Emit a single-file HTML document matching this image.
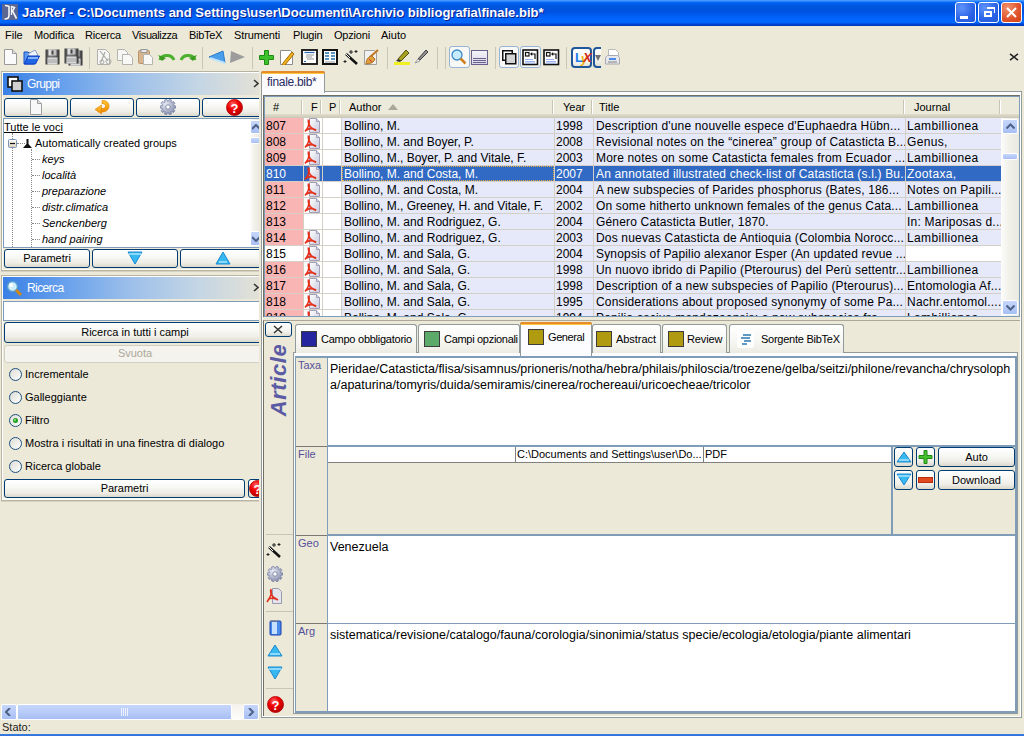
<!DOCTYPE html><html><head><meta charset="utf-8"><style>
*{margin:0;padding:0;box-sizing:border-box}
html,body{width:1024px;height:736px;overflow:hidden;background:#ECE9D8;font-family:"Liberation Sans",sans-serif;font-size:11px;color:#000}
.a{position:absolute}
.t{white-space:pre;line-height:12px;font-size:11px}
.c{white-space:pre;line-height:16px;font-size:12px}
.btn{border:1px solid #003C74;border-radius:3px;background:linear-gradient(#FFFFFF 0%,#F8F8F5 40%,#EEEDE6 75%,#DCD8CC 100%);}
.hdr{background:linear-gradient(90deg,#3A80E6 0%,#6AA2EC 25%,#9DC0EA 50%,#C3D5E5 75%,#E3E1D6 100%)}
.sb{background:linear-gradient(90deg,#FCFCFA,#F0EFE8 50%,#E9E8E1)}
.sbb{border:1px solid #fff;border-radius:2px;background:linear-gradient(#C6D6FB,#B8CCF8 50%,#A6BEF3)}
.tb{white-space:pre;overflow:hidden;text-overflow:clip}
</style></head><body>
<svg width="0" height="0" style="position:absolute"><defs><radialGradient id="hg" cx="0.4" cy="0.3" r="0.75"><stop offset="0" stop-color="#FF6A6A"/><stop offset="0.45" stop-color="#F00000"/><stop offset="1" stop-color="#B00000"/></radialGradient><linearGradient id="rg" x1="0" y1="0" x2="1" y2="1"><stop offset="0" stop-color="#DCDBD3"/><stop offset="1" stop-color="#FFFFFF"/></linearGradient></defs></svg>
<svg width="0" height="0" style="position:absolute"><defs><linearGradient id="dk" x1="0" y1="0" x2="1" y2="0"><stop offset="0" stop-color="#3A3A3A"/><stop offset="0.3" stop-color="#7A7A7A"/><stop offset="0.7" stop-color="#6A6A6A"/><stop offset="1" stop-color="#353535"/></linearGradient><linearGradient id="sh" x1="0" y1="0" x2="1" y2="0"><stop offset="0" stop-color="#E8E8E8"/><stop offset="1" stop-color="#B8B8B8"/></linearGradient></defs></svg>
<div class="a " style="left:0px;top:0px;width:1024px;height:26px;background:linear-gradient(#4A9CFF 0px,#3D93FF 1px,#0A6CFF 2px,#0062F0 3px,#0058E2 5px,#0054DC 8px,#0052E2 12px,#005CF2 15px,#0066FE 19px,#0066FC 22.5px,#0052E2 23.5px,#003CC4 25px,#0034B0 26px)"></div>
<svg class="a" style="left:2px;top:4px;" width="16" height="16" viewBox="0 0 16 16"><rect width="16" height="16" fill="#5B6792"/><path d="M3 1.5c1.5 0 3 0.5 4 1v9c0 2-1.5 3.5-4.5 3.5" fill="none" stroke="#F4F4F4" stroke-width="1.6"/><path d="M9.5 2v9" stroke="#F4F4F4" stroke-width="1.3"/><path d="M9 2.5l3.5 1-2 3.5 4 7.5" fill="none" stroke="#F4F4F4" stroke-width="1.6"/></svg>
<div class="a t" style="left:22px;top:5px;color:#fff;font-weight:bold;font-size:13px;line-height:16px;text-shadow:1px 1px 0 #0A1E8C">JabRef - C:\Documents and Settings\user\Documenti\Archivio bibliografia\finale.bib*</div>
<div class="a " style="left:955px;top:2px;width:21px;height:21px;border:1px solid #fff;border-radius:3px;background:radial-gradient(circle at 30% 25%,#5E93FA,#2B63E6 60%,#2059DA)"></div>
<div class="a " style="left:978px;top:2px;width:21px;height:21px;border:1px solid #fff;border-radius:3px;background:radial-gradient(circle at 30% 25%,#5E93FA,#2B63E6 60%,#2059DA)"></div>
<div class="a " style="left:1001px;top:2px;width:21px;height:21px;border:1px solid #fff;border-radius:3px;background:radial-gradient(circle at 30% 25%,#F0926E,#E0522A 60%,#D04416)"></div>
<div class="a " style="left:960px;top:16px;width:8px;height:3px;background:#fff"></div>
<div class="a " style="left:984px;top:11px;width:8px;height:6px;border:2px solid #fff;border-top-width:2px"></div>
<div class="a " style="left:987px;top:7px;width:8px;height:6px;border:1px solid #fff;border-top-width:2px;border-left:none;border-bottom:none"></div>
<svg class="a" style="left:1006px;top:7px;" width="11" height="11" viewBox="0 0 11 11"><path d="M1 1L10 10M10 1L1 10" stroke="#fff" stroke-width="2"/></svg>
<div class="a t" style="left:5px;top:29px;letter-spacing:0px">File</div>
<div class="a t" style="left:34px;top:29px;letter-spacing:-0.1px">Modifica</div>
<div class="a t" style="left:85px;top:29px;letter-spacing:-0.2px">Ricerca</div>
<div class="a t" style="left:132px;top:29px;letter-spacing:-0.4px">Visualizza</div>
<div class="a t" style="left:189px;top:29px;letter-spacing:-0.3px">BibTeX</div>
<div class="a t" style="left:234px;top:29px;letter-spacing:-0.1px">Strumenti</div>
<div class="a t" style="left:293px;top:29px;letter-spacing:-0.2px">Plugin</div>
<div class="a t" style="left:334px;top:29px;letter-spacing:-0.2px">Opzioni</div>
<div class="a t" style="left:381px;top:29px;letter-spacing:0px">Aiuto</div>
<svg class="a" style="left:2px;top:49px;" width="16" height="16" viewBox="0 0 16 16"><path d="M2.5 0.5h8l4 4v11h-12z" fill="#FAFAFA" stroke="#9A9A9A"/><path d="M10.5 0.5v4h4" fill="#E0E0E0" stroke="#9A9A9A"/></svg>
<svg class="a" style="left:23px;top:49px;" width="17" height="16" viewBox="0 0 17 16"><path d="M1 3h4l1 1h5v11H1z" fill="#5A9AF0" stroke="#1A4AC0"/><path d="M5 5l7-4 3 5-7 4z" fill="#F0F4FA" stroke="#8AA0C0"/><path d="M1.5 15l3.5-8h11.5l-4 8z" fill="#2266E8" stroke="#0C3CC0"/><path d="M5 9h10" stroke="#A8CCFF" stroke-width="1.5"/></svg>
<svg class="a" style="left:45px;top:49px;" width="15" height="16" viewBox="0 0 15 16"><rect x="0.5" y="0.5" width="14" height="15" fill="url(#dk)"/><rect x="3.5" y="0.5" width="8" height="6" fill="url(#sh)"/><rect x="6.5" y="1.5" width="2" height="4" fill="#444"/><rect x="2.5" y="8.5" width="10" height="7" fill="#D8D8D8"/><path d="M2.5 11.0h10M2.5 13.0h10" stroke="#A0A0A0"/></svg>
<svg class="a" style="left:64px;top:48px;" width="20" height="18" viewBox="0 0 20 18"><rect x="4.5" y="2.5" width="14" height="15" fill="url(#dk)"/><rect x="7.5" y="2.5" width="8" height="6" fill="url(#sh)"/><rect x="10.5" y="3.5" width="2" height="4" fill="#444"/><rect x="6.5" y="10.5" width="10" height="7" fill="#D8D8D8"/><path d="M6.5 13.0h10M6.5 15.0h10" stroke="#A0A0A0"/><rect x="0.5" y="0.5" width="14" height="15" fill="url(#dk)"/><rect x="3.5" y="0.5" width="8" height="6" fill="url(#sh)"/><rect x="6.5" y="1.5" width="2" height="4" fill="#444"/><rect x="2.5" y="8.5" width="10" height="7" fill="#D8D8D8"/><path d="M2.5 11.0h10M2.5 13.0h10" stroke="#A0A0A0"/></svg>
<div class="a " style="left:89px;top:47px;width:1px;height:22px;background:#C9C6B6"></div>
<svg class="a" style="left:96px;top:49px;" width="17" height="16" viewBox="0 0 17 16"><path d="M1.5 0.5h8l4 4v11h-12z" fill="#F6F6F4" stroke="#B0B0AC"/><path d="M4 2l8 10M9 3l-4 10" stroke="#A8A8A4" stroke-width="1.2"/><circle cx="12.5" cy="12.5" r="2.5" fill="none" stroke="#A8A8A4"/><circle cx="6" cy="13" r="2" fill="none" stroke="#A8A8A4"/></svg>
<svg class="a" style="left:117px;top:49px;" width="17" height="16" viewBox="0 0 17 16"><path d="M0.5 0.5h7l3 3v8h-10z" fill="#F6F6F4" stroke="#B4B4B0"/><path d="M5.5 5.5h7l3 3v7h-10z" fill="#F8F8F6" stroke="#B4B4B0"/></svg>
<svg class="a" style="left:138px;top:49px;" width="15" height="16" viewBox="0 0 15 16"><rect x="0.5" y="1.5" width="11" height="13" rx="1" fill="#D9B58E" stroke="#B89470"/><rect x="3" y="0.5" width="6" height="3" fill="#E8E8E8" stroke="#999"/><path d="M5.5 5.5h6l3 3v7h-9z" fill="#F8F8F6" stroke="#B4B4B0"/></svg>
<svg class="a" style="left:158px;top:52px;" width="18" height="9" viewBox="0 0 18 9"><path d="M2 8C3 3 13 1 16 8" fill="none" stroke="#4BB02C" stroke-width="3"/><path d="M0 3l4 6 4-3z" fill="#3C9A20"/></svg>
<svg class="a" style="left:179px;top:52px;" width="18" height="9" viewBox="0 0 18 9"><path d="M16 8C15 3 5 1 2 8" fill="none" stroke="#4BB02C" stroke-width="3"/><path d="M18 3l-4 6-4-3z" fill="#3C9A20"/></svg>
<div class="a " style="left:202px;top:47px;width:1px;height:22px;background:#C9C6B6"></div>
<svg class="a" style="left:208px;top:50px;" width="18" height="14" viewBox="0 0 18 14"><path d="M1 7L15 1l2 12z" fill="#4A9FEA" stroke="#2A7AD0"/><path d="M2 8l15 5" stroke="#BFE3FF" stroke-width="2"/></svg>
<svg class="a" style="left:229px;top:50px;" width="17" height="14" viewBox="0 0 17 14"><path d="M16 7L2 1l-1 12z" fill="#9C9C9C"/></svg>
<div class="a " style="left:252px;top:47px;width:1px;height:22px;background:#C9C6B6"></div>
<svg class="a" style="left:259px;top:50px;" width="15" height="15" viewBox="0 0 15 15"><path d="M5.5 0.5h4v5h5v4h-5v5h-4v-5h-5v-4h5z" fill="#3DC22C" stroke="#1E8A14"/></svg>
<svg class="a" style="left:279px;top:49px;" width="16" height="16" viewBox="0 0 16 16"><path d="M1.5 1.5h10l2 2v12h-12z" fill="#fff" stroke="#8C8C8C"/><path d="M4 14l9-11 2 2-9 11-3 1z" fill="#F0B020" stroke="#A86E00"/></svg>
<svg class="a" style="left:301px;top:49px;" width="17" height="16" viewBox="0 0 17 16"><rect x="1" y="1" width="15" height="14" fill="#fff" stroke="#111" stroke-width="1.8"/><path d="M3.5 3.5h10" stroke="#2A68B8" stroke-width="1.2"/><path d="M5 6h8M5 8h6M6 10h7" stroke="#8A8A8A" stroke-width="0.9"/><path d="M3 12.5h2" stroke="#2A68B8" stroke-width="1"/></svg>
<svg class="a" style="left:322px;top:49px;" width="16" height="16" viewBox="0 0 16 16"><rect x="1" y="1" width="14" height="14" fill="#fff" stroke="#111" stroke-width="2"/><path d="M3 4h4M9 4h4M3 7h4M9 7h4M3 10h4M9 10h4" stroke="#2070B0" stroke-width="1.3"/><path d="M3 13h10" stroke="#909090"/></svg>
<svg class="a" style="left:343px;top:49px;" width="16" height="16" viewBox="0 0 16 16"><path d="M3 5l11 10" stroke="#111" stroke-width="2.5"/><path d="M3 5l4 4" stroke="#fff" stroke-width="1"/><path d="M8 1v4M6 3h4M13 1v3M11.5 2.5h3M2 11v3M0.5 12.5h3" stroke="#222" stroke-width="1"/></svg>
<svg class="a" style="left:363px;top:49px;" width="17" height="16" viewBox="0 0 17 16"><path d="M1.5 1.5h10l2 2v12h-12z" fill="#F0F0F0" stroke="#A0A0A0"/><path d="M7 8l8-7" stroke="#C07820" stroke-width="2"/><path d="M3 15c0-5 3-8 6-8l3 3c-1 3-4 5-9 5z" fill="#E0A040" stroke="#B07020"/><path d="M6 10l3 3" stroke="#D03030"/></svg>
<div class="a " style="left:387px;top:47px;width:1px;height:22px;background:#C9C6B6"></div>
<svg class="a" style="left:393px;top:49px;" width="17" height="16" viewBox="0 0 17 16"><path d="M5 10l8-9 3 3-8 8z" fill="#A8A020" stroke="#55500A"/><path d="M3 12l2-2 3 2-1 1z" fill="#333"/><rect x="1" y="13" width="16" height="3" fill="#F0F020"/></svg>
<svg class="a" style="left:414px;top:49px;" width="14" height="16" viewBox="0 0 14 16"><path d="M4 10l8-9 2 2-8 8z" fill="#909090" stroke="#404040"/><path d="M1 14l3-4 2 2z" fill="#fff" stroke="#999"/></svg>
<div class="a " style="left:437px;top:47px;width:1px;height:22px;background:#C9C6B6"></div>
<div class="a " style="left:445px;top:47px;width:1px;height:22px;background:#C9C6B6"></div>
<div class="a " style="left:449px;top:46px;width:21px;height:22px;border:1px solid #97B4D5;border-radius:3px;background:#F8F8F6"></div>
<svg class="a" style="left:451px;top:49px;" width="16" height="16" viewBox="0 0 16 16"><circle cx="6" cy="6" r="5" fill="#C8ECFF" stroke="#3A8AC8" stroke-width="1.3"/><path d="M9.5 9.5l5 5" stroke="#D08020" stroke-width="2.5"/></svg>
<svg class="a" style="left:471px;top:50px;" width="17" height="15" viewBox="0 0 17 15"><defs><linearGradient id="pv" x1="0" y1="0" x2="0" y2="1"><stop offset="0" stop-color="#F4F4FA"/><stop offset="1" stop-color="#D8D6EA"/></linearGradient></defs><rect x="0.5" y="0.5" width="16" height="14" fill="url(#pv)" stroke="#6A608A"/><path d="M2 8.5h13M2 10.5h13M2 12.5h13" stroke="#6A608A"/></svg>
<div class="a " style="left:495px;top:47px;width:1px;height:22px;background:#C9C6B6"></div>
<div class="a " style="left:499px;top:46px;width:20px;height:22px;border:1px solid #97B4D5;border-radius:3px;background:#F8F8F6"></div>
<svg class="a" style="left:501px;top:49px;" width="16" height="16" viewBox="0 0 16 16"><rect x="1.75" y="1.75" width="9.5" height="9.5" fill="#fff" stroke="#111" stroke-width="1.5"/><rect x="4.75" y="4.75" width="10" height="10" fill="#D4D4D4" stroke="#111" stroke-width="1.5"/></svg>
<div class="a " style="left:520px;top:46px;width:21px;height:22px;border:1px solid #97B4D5;border-radius:3px;background:#F8F8F6"></div>
<svg class="a" style="left:522px;top:49px;" width="17" height="17" viewBox="0 0 17 17"><rect x="1" y="1" width="14.5" height="14.5" fill="#fff" stroke="#111" stroke-width="1.6"/><rect x="3.5" y="3.5" width="3.5" height="3.5" fill="none" stroke="#111" stroke-width="1.2"/><path d="M13 10V5H9" fill="none" stroke="#111" stroke-width="1.2"/><path d="M8 5l2.2-2v4z" fill="#111"/><path d="M3 10.5h8M3 12.5h10M3 14h10" stroke="#8FA8F0" stroke-width="0.9"/></svg>
<svg class="a" style="left:543px;top:49px;" width="17" height="17" viewBox="0 0 17 17"><rect x="1" y="1" width="14.5" height="14.5" fill="#fff" stroke="#111" stroke-width="1.6"/><rect x="3.5" y="3.5" width="3.5" height="3.5" fill="none" stroke="#111" stroke-width="1.2"/><path d="M13 10V5H9" fill="none" stroke="#111" stroke-width="1.2"/><path d="M8 5l2.2-2v4z" fill="#111"/><path d="M3 10.5h8M3 12.5h10M3 14h10" stroke="#8FA8F0" stroke-width="0.9"/></svg>
<div class="a " style="left:566px;top:47px;width:1px;height:22px;background:#C9C6B6"></div>
<div class="a " style="left:571px;top:47px;width:21px;height:21px;border:2px solid #20569A;border-radius:4px;background:linear-gradient(#FFFFFF,#F6F5F0 70%,#E8E6DC)"></div>
<div class="a t" style="left:575px;top:51px;color:#1E7CF0;font-size:13px;line-height:13px;font-weight:bold;letter-spacing:-1px">L</div>
<div class="a t" style="left:581px;top:53px;color:#F0B010;font-size:12px;line-height:12px;font-weight:bold;font-style:italic">y</div>
<div class="a t" style="left:583px;top:51px;color:#D02818;font-size:13px;line-height:13px;font-style:italic;font-weight:bold">X</div>
<div class="a" style="left:593px;top:47px;width:8px;height:21px;overflow:hidden"><div class="a" style="left:0;top:0;width:12px;height:21px;border:2px solid #20569A;border-radius:4px;background:linear-gradient(#FFFFFF,#F0EFE8 70%,#E0DED4)"></div></div>
<svg class="a" style="left:595px;top:55px;" width="6" height="6" viewBox="0 0 6 6"><path d="M0 0h6l-3 6z" fill="#707070"/></svg>
<svg class="a" style="left:605px;top:49px;" width="15" height="16" viewBox="0 0 15 16"><path d="M3.5 0.5h7l3 3v5h-10z" fill="#fff" stroke="#B8B8B8"/><path d="M0.5 8.5l2-2h10l2 2v6.5h-14z" fill="#E8E8EC" stroke="#A8A8B0"/><rect x="4" y="9" width="7" height="2" fill="#4A8AE8"/><path d="M3 13h9" stroke="#808080"/></svg>
<svg class="a" style="left:1009px;top:53px;" width="10" height="8" viewBox="0 0 10 8"><path d="M1 0.8l8 6.4M9 0.8l-8 6.4" stroke="#222" stroke-width="1.5"/></svg>
<div class="a" style="left:0;top:0;width:259px;height:736px;overflow:hidden">
<div class="a " style="left:1px;top:71px;width:259px;height:200px;border:1px solid #B8B4A4;border-right:none;background:#ECE9D8"></div>
<div class="a " style="left:2px;top:72px;width:258px;height:1px;background:#fff"></div>
<div class="a " style="left:2px;top:72px;width:1px;height:197px;background:#fff"></div>
<div class="a " style="left:2px;top:269px;width:258px;height:1px;background:#FCFBF5"></div>
<div class="a " style="left:1px;top:271px;width:259px;height:1px;background:#D6D2C2"></div>
<div class="a hdr" style="left:3px;top:73px;width:257px;height:22px;"></div>
<svg class="a" style="left:7px;top:76px;" width="16" height="16" viewBox="0 0 16 16"><rect x="1" y="1" width="10" height="10" fill="#fff" stroke="#111" stroke-width="1.6"/><rect x="5" y="5" width="10" height="10" fill="#D0D0D0" stroke="#111" stroke-width="1.6"/></svg>
<div class="a t" style="left:27px;top:77px;color:#fff;font-size:12px;line-height:14px;letter-spacing:-0.6px">Gruppi</div>
<svg class="a" style="left:253px;top:79px;" width="6" height="9" viewBox="0 0 6 9"><path d="M1 1l4 3.5L1 8" fill="none" stroke="#333" stroke-width="1.6"/></svg>
<div class="a btn" style="left:4px;top:98px;width:64px;height:19px;"></div>
<div class="a btn" style="left:70px;top:98px;width:64px;height:19px;"></div>
<div class="a btn" style="left:136px;top:98px;width:64px;height:19px;"></div>
<div class="a btn" style="left:202px;top:98px;width:78px;height:19px;"></div>
<svg class="a" style="left:30px;top:99px;" width="12" height="16" viewBox="0 0 12 16"><path d="M0.5 0.5h7l4 4v11h-11z" fill="#F8F8F8" stroke="#A0A0A0"/><path d="M7.5 0.5v4h4" fill="#ddd" stroke="#A0A0A0"/></svg>
<svg class="a" style="left:94px;top:99px;" width="17" height="16" viewBox="0 0 17 16"><defs><linearGradient id="rf" x1="0" y1="0" x2="0" y2="1"><stop offset="0" stop-color="#FFC830"/><stop offset="1" stop-color="#F08A00"/></linearGradient></defs><path d="M8 1.5c4 -0.5 7 2 7 5.5c0 4-3.5 6.5-8 6l0.5-3.5c2.5 0.3 4-1 4-2.5c0-1.8-1.5-2.5-3.5-2.3z" fill="url(#rf)" stroke="#E07800" stroke-width="0.6"/><path d="M1 10.5l6.5-4.5v9z" fill="url(#rf)" stroke="#E07800" stroke-width="0.6"/></svg>
<svg class="a" style="left:160px;top:99px;" width="16" height="16" viewBox="0 0 16 16"><defs><radialGradient id="gg" cx="0.35" cy="0.3" r="0.8"><stop offset="0" stop-color="#E8EAF4"/><stop offset="1" stop-color="#8088A8"/></radialGradient></defs><path d="M13.38 6.44L15.72 6.91L15.72 9.09L13.38 9.56L13.27 9.90L14.89 11.65L13.60 13.42L11.44 12.42L11.14 12.64L11.43 15.01L9.35 15.68L8.18 13.60L7.82 13.60L6.65 15.68L4.57 15.01L4.86 12.64L4.56 12.42L2.40 13.42L1.11 11.65L2.73 9.90L2.62 9.56L0.28 9.09L0.28 6.91L2.62 6.44L2.73 6.10L1.11 4.35L2.40 2.58L4.56 3.58L4.86 3.36L4.57 0.99L6.65 0.32L7.82 2.40L8.18 2.40L9.35 0.32L11.43 0.99L11.14 3.36L11.44 3.58L13.60 2.58L14.89 4.35L13.27 6.10z" fill="url(#gg)" stroke="#7078A0" stroke-width="0.7"/><circle cx="8" cy="8" r="2.2" fill="#fff" stroke="#70789A" stroke-width="0.8"/></svg>
<svg class="a" style="left:226px;top:99px;" width="17" height="17" viewBox="0 0 17 17"><circle cx="8.5" cy="8.5" r="8" fill="url(#hg)" stroke="#B00000" stroke-width="0.8"/><text x="8.5" y="13.5" text-anchor="middle" font-family="Liberation Sans" font-weight="bold" font-size="13" fill="#fff">?</text></svg>
<div class="a " style="left:3px;top:118px;width:257px;height:130px;background:#fff;border:1px solid #7F9DB9;border-right:none;overflow:hidden"></div>
<div class="a t" style="left:4px;top:120px;text-decoration:underline;line-height:14px">Tutte le voci</div>
<div class="a " style="left:12px;top:133px;width:1px;height:114px;border-left:1px dotted #888"></div>
<div class="a " style="left:31px;top:149px;width:1px;height:98px;border-left:1px dotted #888"></div>
<div class="a " style="left:17px;top:143px;width:8px;height:1px;border-top:1px dotted #888"></div>
<svg class="a" style="left:8px;top:139px;" width="9" height="9" viewBox="0 0 9 9"><defs><linearGradient id="mb" x1="0" y1="0" x2="0" y2="1"><stop offset="0" stop-color="#FFFFFF"/><stop offset="1" stop-color="#D8CDB8"/></linearGradient></defs><rect x="0.5" y="0.5" width="8" height="8" rx="1" fill="url(#mb)" stroke="#7A94B8"/><path d="M2 4.5h5" stroke="#111" stroke-width="1.2"/></svg>
<svg class="a" style="left:23px;top:139px;" width="9" height="9" viewBox="0 0 9 9"><path d="M3.5 0h2v5l3.5 4H0l3.5-4z" fill="#111"/></svg>
<div class="a t" style="left:35px;top:136px;line-height:14px">Automatically created groups</div>
<div class="a " style="left:32px;top:159px;width:8px;height:1px;border-top:1px dotted #888"></div>
<div class="a t" style="left:42px;top:152px;font-style:italic;line-height:14px">keys</div>
<div class="a " style="left:32px;top:175px;width:8px;height:1px;border-top:1px dotted #888"></div>
<div class="a t" style="left:42px;top:168px;font-style:italic;line-height:14px">località</div>
<div class="a " style="left:32px;top:191px;width:8px;height:1px;border-top:1px dotted #888"></div>
<div class="a t" style="left:42px;top:184px;font-style:italic;line-height:14px">preparazione</div>
<div class="a " style="left:32px;top:207px;width:8px;height:1px;border-top:1px dotted #888"></div>
<div class="a t" style="left:42px;top:200px;font-style:italic;line-height:14px">distr.climatica</div>
<div class="a " style="left:32px;top:223px;width:8px;height:1px;border-top:1px dotted #888"></div>
<div class="a t" style="left:42px;top:216px;font-style:italic;line-height:14px">Senckenberg</div>
<div class="a " style="left:32px;top:239px;width:8px;height:1px;border-top:1px dotted #888"></div>
<div class="a t" style="left:42px;top:232px;font-style:italic;line-height:14px">hand pairing</div>
<div class="a sb" style="left:250px;top:119px;width:10px;height:128px;"></div>
<div class="a sbb" style="left:250px;top:120px;width:16px;height:14px;"></div>
<svg class="a" style="left:252px;top:124px;" width="8" height="6" viewBox="0 0 8 6"><path d="M0 5l4-4 4 4" fill="none" stroke="#4D6185" stroke-width="2"/></svg>
<div class="a sbb" style="left:250px;top:137px;width:16px;height:7px;"></div>
<div class="a sbb" style="left:250px;top:231px;width:16px;height:15px;"></div>
<svg class="a" style="left:252px;top:236px;" width="8" height="6" viewBox="0 0 8 6"><path d="M0 1l4 4 4-4" fill="none" stroke="#4D6185" stroke-width="2"/></svg>
<div class="a btn" style="left:4px;top:249px;width:86px;height:19px;"></div>
<div class="a t" style="left:4px;top:252px;width:86px;text-align:center">Parametri</div>
<div class="a btn" style="left:92px;top:249px;width:86px;height:19px;"></div>
<svg class="a" style="left:127px;top:251px;" width="16" height="14" viewBox="0 0 16 14"><path d="M1 1h14L8 13z" fill="#38B8F0" stroke="#1A88D0"/><path d="M2 3h12" stroke="#A8E4FF" stroke-width="1.5"/></svg>
<div class="a btn" style="left:180px;top:249px;width:100px;height:19px;"></div>
<svg class="a" style="left:215px;top:251px;" width="16" height="14" viewBox="0 0 16 14"><path d="M1 13h14L8 1z" fill="#38B8F0" stroke="#1A88D0"/><path d="M4 11h8" stroke="#A8E4FF" stroke-width="1.5"/></svg>
<div class="a " style="left:1px;top:275px;width:259px;height:226px;border:1px solid #B8B4A4;border-right:none"></div>
<div class="a " style="left:2px;top:276px;width:258px;height:1px;background:#fff"></div>
<div class="a " style="left:2px;top:276px;width:1px;height:223px;background:#fff"></div>
<div class="a " style="left:2px;top:498px;width:258px;height:2px;background:#FCFBF5"></div>
<div class="a " style="left:1px;top:501px;width:259px;height:1px;background:#D6D2C2"></div>
<div class="a hdr" style="left:3px;top:277px;width:257px;height:22px;"></div>
<svg class="a" style="left:6px;top:280px;" width="17" height="17" viewBox="0 0 17 17"><circle cx="6.5" cy="6.5" r="5" fill="#CFEFFF" stroke="#5A9ED0" stroke-width="1.5"/><circle cx="5" cy="5" r="2" fill="#fff"/><path d="M10 10l5 5" stroke="#D08818" stroke-width="3"/></svg>
<div class="a t" style="left:27px;top:281px;color:#fff;font-size:12px;line-height:14px;letter-spacing:-0.6px">Ricerca</div>
<svg class="a" style="left:253px;top:283px;" width="6" height="9" viewBox="0 0 6 9"><path d="M1 1l4 3.5L1 8" fill="none" stroke="#333" stroke-width="1.6"/></svg>
<div class="a " style="left:3px;top:301px;width:260px;height:20px;background:#fff;border:1px solid #7F9DB9"></div>
<div class="a btn" style="left:4px;top:322px;width:270px;height:21px;"></div>
<div class="a t" style="left:4px;top:326px;width:262px;text-align:center">Ricerca in tutti i campi</div>
<div class="a " style="left:4px;top:345px;width:270px;height:18px;border:1px solid #D0CFC4;border-radius:3px;background:#F4F3EE"></div>
<div class="a t" style="left:4px;top:347px;width:262px;text-align:center;color:#ACA899">Svuota</div>
<svg class="a" style="left:9px;top:368px;" width="13" height="13" viewBox="0 0 13 13"><circle cx="6.5" cy="6.5" r="6" fill="url(#rg)" stroke="#1C5180"/></svg>
<div class="a t" style="left:25px;top:367px;line-height:14px">Incrementale</div>
<svg class="a" style="left:9px;top:391px;" width="13" height="13" viewBox="0 0 13 13"><circle cx="6.5" cy="6.5" r="6" fill="url(#rg)" stroke="#1C5180"/></svg>
<div class="a t" style="left:25px;top:390px;line-height:14px">Galleggiante</div>
<svg class="a" style="left:9px;top:414px;" width="13" height="13" viewBox="0 0 13 13"><circle cx="6.5" cy="6.5" r="6" fill="url(#rg)" stroke="#1C5180"/><circle cx="6.5" cy="6.5" r="2.5" fill="#21A121"/><circle cx="6" cy="6" r="1" fill="#8EE08E"/></svg>
<div class="a t" style="left:25px;top:413px;line-height:14px">Filtro</div>
<svg class="a" style="left:9px;top:437px;" width="13" height="13" viewBox="0 0 13 13"><circle cx="6.5" cy="6.5" r="6" fill="url(#rg)" stroke="#1C5180"/></svg>
<div class="a t" style="left:25px;top:436px;line-height:14px">Mostra i risultati in una finestra di dialogo</div>
<svg class="a" style="left:9px;top:460px;" width="13" height="13" viewBox="0 0 13 13"><circle cx="6.5" cy="6.5" r="6" fill="url(#rg)" stroke="#1C5180"/></svg>
<div class="a t" style="left:25px;top:459px;line-height:14px">Ricerca globale</div>
<div class="a btn" style="left:4px;top:479px;width:241px;height:19px;"></div>
<div class="a t" style="left:4px;top:482px;width:241px;text-align:center">Parametri</div>
<div class="a btn" style="left:248px;top:479px;width:30px;height:19px;"></div>
<svg class="a" style="left:249px;top:480px;" width="17" height="17" viewBox="0 0 17 17"><circle cx="8.5" cy="8.5" r="8" fill="url(#hg)" stroke="#B00000" stroke-width="0.8"/><text x="8.5" y="13.5" text-anchor="middle" font-family="Liberation Sans" font-weight="bold" font-size="13" fill="#fff">?</text></svg>
<div class="a " style="left:1px;top:704px;width:258px;height:16px;background:linear-gradient(#F3F1EA,#FEFEFB)"></div>
<div class="a sbb" style="left:1px;top:704px;width:16px;height:16px;"></div>
<svg class="a" style="left:5px;top:708px;" width="7" height="8" viewBox="0 0 7 8"><path d="M5 0L1 4l4 4" fill="none" stroke="#4D6185" stroke-width="2"/></svg>
<div class="a sbb" style="left:17px;top:704px;width:215px;height:16px;"></div>
<svg class="a" style="left:121px;top:708px;" width="7" height="8" viewBox="0 0 7 8"><path d="M.5 0v8M2.5 0v8M4.5 0v8M6.5 0v8" stroke="#EEF3FF"/></svg>
<div class="a sbb" style="left:243px;top:704px;width:16px;height:16px;"></div>
<svg class="a" style="left:248px;top:708px;" width="7" height="8" viewBox="0 0 7 8"><path d="M1 0l4 4-4 4" fill="none" stroke="#4D6185" stroke-width="2"/></svg>
</div>
<div class="a " style="left:259px;top:70px;width:2px;height:651px;background:#ECE9D8"></div>
<div class="a t" style="left:2px;top:720px;line-height:14px;color:#222">Stato:</div>
<div class="a " style="left:0px;top:734px;width:1024px;height:2px;background:linear-gradient(#3C7FE2,#2F70D8)"></div>
<div class="a " style="left:261px;top:91px;width:761px;height:627px;border:1px solid #919B9C;background:#ECE9D8"></div>
<div class="a " style="left:262px;top:92px;width:759px;height:3px;background:#FCFCFE"></div>
<div class="a " style="left:262px;top:92px;width:1px;height:625px;background:#fff"></div>
<div class="a " style="left:1020px;top:92px;width:1px;height:625px;background:#fff"></div>
<div class="a " style="left:262px;top:716px;width:759px;height:1px;background:#fff"></div>
<div class="a " style="left:261px;top:71px;width:64px;height:22px;border:1px solid #919B9C;border-bottom:none;border-radius:3px 3px 0 0;background:#FCFCFE"></div>
<div class="a " style="left:261px;top:71px;width:64px;height:2px;background:#E68B2C;border-radius:3px 3px 0 0"></div>
<div class="a " style="left:262px;top:73px;width:62px;height:1px;background:#FFC73C"></div>
<div class="a t" style="left:267px;top:75px;color:#2A2A60;font-size:12px;line-height:14px;letter-spacing:-0.3px">finale.bib*</div>
<div class="a " style="left:263px;top:95px;width:757px;height:222px;border-top:1px solid #716F64;border-left:1px solid #716F64;background:#fff"></div>
<div class="a " style="left:264px;top:96px;width:756px;height:221px;border:1px solid #7F9DB9;border-right:1px solid #7F9DB9;background:#fff;overflow:hidden"></div>
<div class="a " style="left:265px;top:97px;width:736px;height:21px;background:linear-gradient(#EBEADB 0px,#EBEADB 17px,#E2DECD 17px,#D6D2C2 19px,#CBC7B8 21px)"></div>
<div class="a " style="left:1001px;top:97px;width:18px;height:21px;background:linear-gradient(#EBEADB 0px,#EBEADB 17px,#E2DECD 17px,#D6D2C2 19px,#CBC7B8 21px)"></div>
<div class="a " style="left:301px;top:100px;width:1px;height:14px;background:#C7C5B2"></div>
<div class="a " style="left:302px;top:100px;width:1px;height:14px;background:#FFFFFF"></div>
<div class="a " style="left:320px;top:100px;width:1px;height:14px;background:#C7C5B2"></div>
<div class="a " style="left:321px;top:100px;width:1px;height:14px;background:#FFFFFF"></div>
<div class="a " style="left:339px;top:100px;width:1px;height:14px;background:#C7C5B2"></div>
<div class="a " style="left:340px;top:100px;width:1px;height:14px;background:#FFFFFF"></div>
<div class="a " style="left:552px;top:100px;width:1px;height:14px;background:#C7C5B2"></div>
<div class="a " style="left:553px;top:100px;width:1px;height:14px;background:#FFFFFF"></div>
<div class="a " style="left:591px;top:100px;width:1px;height:14px;background:#C7C5B2"></div>
<div class="a " style="left:592px;top:100px;width:1px;height:14px;background:#FFFFFF"></div>
<div class="a " style="left:903px;top:100px;width:1px;height:14px;background:#C7C5B2"></div>
<div class="a " style="left:904px;top:100px;width:1px;height:14px;background:#FFFFFF"></div>
<div class="a " style="left:999px;top:100px;width:1px;height:14px;background:#C7C5B2"></div>
<div class="a " style="left:1000px;top:100px;width:1px;height:14px;background:#FFFFFF"></div>
<div class="a t" style="left:273px;top:101px;line-height:12px">#</div>
<div class="a t" style="left:311px;top:101px;line-height:12px">F</div>
<div class="a t" style="left:329px;top:101px;line-height:12px">P</div>
<div class="a t" style="left:349px;top:101px;line-height:12px">Author</div>
<div class="a t" style="left:563px;top:101px;line-height:12px">Year</div>
<div class="a t" style="left:599px;top:101px;line-height:12px">Title</div>
<div class="a t" style="left:914px;top:101px;line-height:12px">Journal</div>
<svg class="a" style="left:388px;top:104px;" width="10" height="6" viewBox="0 0 10 6"><path d="M0 6L5 0l5 6z" fill="#ACA899"/></svg>
<div class="a" style="left:265px;top:118px;width:736px;height:198px;overflow:hidden">
<div class="a " style="left:0px;top:0px;width:38px;height:15px;background:#F9B4B4"></div>
<div class="a " style="left:39px;top:0px;width:18px;height:15px;background:#FFFFFF"></div>
<div class="a " style="left:58px;top:0px;width:18px;height:15px;background:#FFFFFF"></div>
<div class="a " style="left:77px;top:0px;width:212px;height:15px;background:#E5E9FA"></div>
<div class="a " style="left:290px;top:0px;width:38px;height:15px;background:#E5E9FA"></div>
<div class="a " style="left:329px;top:0px;width:311px;height:15px;background:#E5E9FA"></div>
<div class="a " style="left:641px;top:0px;width:95px;height:15px;background:#E5E9FA"></div>
<div class="a " style="left:0px;top:15px;width:736px;height:1px;background:#D4D0C8"></div>
<svg class="a" style="left:39px;top:0px;" width="17" height="15" viewBox="0 0 17 15"><defs><linearGradient id="pg" x1="0" y1="0" x2="1" y2="1"><stop offset="0" stop-color="#FFFFFF"/><stop offset="1" stop-color="#C8C8DC"/></linearGradient></defs><path d="M5.5 0.5h7l3 3v11h-10z" fill="url(#pg)" stroke="#A0A0B8"/><path d="M12.5 0.5v3h3" fill="#D8D8E8" stroke="#A0A0B8"/><path d="M4.5 1.5c-0.5 3 0.5 6 3 8.5l4.5 2.5M4.8 2c0.8 4-1 8.5-3.8 11.5M1.5 12.5c3-2 7-2.5 10.5-0.5" fill="none" stroke="#E5301C" stroke-width="1.7"/></svg>
<div class="a c" style="left:1px;top:0px;color:#000;width:37px;overflow:hidden">807</div>
<div class="a c" style="left:79px;top:0px;color:#000;width:210px;overflow:hidden">Bollino, M.</div>
<div class="a c" style="left:291px;top:0px;color:#000">1998</div>
<div class="a c" style="left:331px;top:0px;color:#000;width:309px;overflow:hidden;letter-spacing:0.17px">Description d'une nouvelle espece d'Euphaedra Hübn...</div>
<div class="a c" style="left:642px;top:0px;color:#000;width:96px;overflow:hidden;letter-spacing:0.35px">Lambillionea</div>
<div class="a " style="left:0px;top:16px;width:38px;height:15px;background:#F9B4B4"></div>
<div class="a " style="left:39px;top:16px;width:18px;height:15px;background:#FFFFFF"></div>
<div class="a " style="left:58px;top:16px;width:18px;height:15px;background:#FFFFFF"></div>
<div class="a " style="left:77px;top:16px;width:212px;height:15px;background:#E5E9FA"></div>
<div class="a " style="left:290px;top:16px;width:38px;height:15px;background:#E5E9FA"></div>
<div class="a " style="left:329px;top:16px;width:311px;height:15px;background:#E5E9FA"></div>
<div class="a " style="left:641px;top:16px;width:95px;height:15px;background:#E5E9FA"></div>
<div class="a " style="left:0px;top:31px;width:736px;height:1px;background:#D4D0C8"></div>
<svg class="a" style="left:39px;top:16px;" width="17" height="15" viewBox="0 0 17 15"><defs><linearGradient id="pg" x1="0" y1="0" x2="1" y2="1"><stop offset="0" stop-color="#FFFFFF"/><stop offset="1" stop-color="#C8C8DC"/></linearGradient></defs><path d="M5.5 0.5h7l3 3v11h-10z" fill="url(#pg)" stroke="#A0A0B8"/><path d="M12.5 0.5v3h3" fill="#D8D8E8" stroke="#A0A0B8"/><path d="M4.5 1.5c-0.5 3 0.5 6 3 8.5l4.5 2.5M4.8 2c0.8 4-1 8.5-3.8 11.5M1.5 12.5c3-2 7-2.5 10.5-0.5" fill="none" stroke="#E5301C" stroke-width="1.7"/></svg>
<div class="a c" style="left:1px;top:16px;color:#000;width:37px;overflow:hidden">808</div>
<div class="a c" style="left:79px;top:16px;color:#000;width:210px;overflow:hidden">Bollino, M. and Boyer, P.</div>
<div class="a c" style="left:291px;top:16px;color:#000">2008</div>
<div class="a c" style="left:331px;top:16px;color:#000;width:309px;overflow:hidden;letter-spacing:0.17px">Revisional notes on the “cinerea” group of Catasticta B...</div>
<div class="a c" style="left:642px;top:16px;color:#000;width:96px;overflow:hidden;letter-spacing:0.35px">Genus,</div>
<div class="a " style="left:0px;top:32px;width:38px;height:15px;background:#F9B4B4"></div>
<div class="a " style="left:39px;top:32px;width:18px;height:15px;background:#FFFFFF"></div>
<div class="a " style="left:58px;top:32px;width:18px;height:15px;background:#FFFFFF"></div>
<div class="a " style="left:77px;top:32px;width:212px;height:15px;background:#E5E9FA"></div>
<div class="a " style="left:290px;top:32px;width:38px;height:15px;background:#E5E9FA"></div>
<div class="a " style="left:329px;top:32px;width:311px;height:15px;background:#E5E9FA"></div>
<div class="a " style="left:641px;top:32px;width:95px;height:15px;background:#E5E9FA"></div>
<div class="a " style="left:0px;top:47px;width:736px;height:1px;background:#D4D0C8"></div>
<svg class="a" style="left:39px;top:32px;" width="17" height="15" viewBox="0 0 17 15"><defs><linearGradient id="pg" x1="0" y1="0" x2="1" y2="1"><stop offset="0" stop-color="#FFFFFF"/><stop offset="1" stop-color="#C8C8DC"/></linearGradient></defs><path d="M5.5 0.5h7l3 3v11h-10z" fill="url(#pg)" stroke="#A0A0B8"/><path d="M12.5 0.5v3h3" fill="#D8D8E8" stroke="#A0A0B8"/><path d="M4.5 1.5c-0.5 3 0.5 6 3 8.5l4.5 2.5M4.8 2c0.8 4-1 8.5-3.8 11.5M1.5 12.5c3-2 7-2.5 10.5-0.5" fill="none" stroke="#E5301C" stroke-width="1.7"/></svg>
<div class="a c" style="left:1px;top:32px;color:#000;width:37px;overflow:hidden">809</div>
<div class="a c" style="left:79px;top:32px;color:#000;width:210px;overflow:hidden">Bollino, M., Boyer, P. and Vitale, F.</div>
<div class="a c" style="left:291px;top:32px;color:#000">2003</div>
<div class="a c" style="left:331px;top:32px;color:#000;width:309px;overflow:hidden;letter-spacing:0.17px">More notes on some Catasticta females from Ecuador ...</div>
<div class="a c" style="left:642px;top:32px;color:#000;width:96px;overflow:hidden;letter-spacing:0.35px">Lambillionea</div>
<div class="a " style="left:0px;top:48px;width:38px;height:15px;background:#316AC5"></div>
<div class="a " style="left:39px;top:48px;width:18px;height:15px;background:#316AC5"></div>
<div class="a " style="left:58px;top:48px;width:18px;height:15px;background:#316AC5"></div>
<div class="a " style="left:77px;top:48px;width:212px;height:15px;background:#316AC5"></div>
<div class="a " style="left:290px;top:48px;width:38px;height:15px;background:#316AC5"></div>
<div class="a " style="left:329px;top:48px;width:311px;height:15px;background:#316AC5"></div>
<div class="a " style="left:641px;top:48px;width:95px;height:15px;background:#316AC5"></div>
<div class="a " style="left:0px;top:63px;width:736px;height:1px;background:#D4D0C8"></div>
<svg class="a" style="left:39px;top:48px;" width="17" height="15" viewBox="0 0 17 15"><defs><linearGradient id="pg" x1="0" y1="0" x2="1" y2="1"><stop offset="0" stop-color="#FFFFFF"/><stop offset="1" stop-color="#C8C8DC"/></linearGradient></defs><path d="M5.5 0.5h7l3 3v11h-10z" fill="url(#pg)" stroke="#A0A0B8"/><path d="M12.5 0.5v3h3" fill="#D8D8E8" stroke="#A0A0B8"/><path d="M4.5 1.5c-0.5 3 0.5 6 3 8.5l4.5 2.5M4.8 2c0.8 4-1 8.5-3.8 11.5M1.5 12.5c3-2 7-2.5 10.5-0.5" fill="none" stroke="#E5301C" stroke-width="1.7"/></svg>
<div class="a c" style="left:1px;top:48px;color:#fff;width:37px;overflow:hidden">810</div>
<div class="a c" style="left:79px;top:48px;color:#fff;width:210px;overflow:hidden">Bollino, M. and Costa, M.</div>
<div class="a c" style="left:291px;top:48px;color:#fff">2007</div>
<div class="a c" style="left:331px;top:48px;color:#fff;width:309px;overflow:hidden;letter-spacing:0.17px">An annotated illustrated check-list of Catasticta (s.l.) Bu...</div>
<div class="a c" style="left:642px;top:48px;color:#fff;width:96px;overflow:hidden;letter-spacing:0.35px">Zootaxa,</div>
<div class="a " style="left:77px;top:48px;width:212px;height:15px;border:1px dotted #E8B040"></div>
<div class="a " style="left:0px;top:64px;width:38px;height:15px;background:#F9B4B4"></div>
<div class="a " style="left:39px;top:64px;width:18px;height:15px;background:#FFFFFF"></div>
<div class="a " style="left:58px;top:64px;width:18px;height:15px;background:#FFFFFF"></div>
<div class="a " style="left:77px;top:64px;width:212px;height:15px;background:#E5E9FA"></div>
<div class="a " style="left:290px;top:64px;width:38px;height:15px;background:#E5E9FA"></div>
<div class="a " style="left:329px;top:64px;width:311px;height:15px;background:#E5E9FA"></div>
<div class="a " style="left:641px;top:64px;width:95px;height:15px;background:#E5E9FA"></div>
<div class="a " style="left:0px;top:79px;width:736px;height:1px;background:#D4D0C8"></div>
<svg class="a" style="left:39px;top:64px;" width="17" height="15" viewBox="0 0 17 15"><defs><linearGradient id="pg" x1="0" y1="0" x2="1" y2="1"><stop offset="0" stop-color="#FFFFFF"/><stop offset="1" stop-color="#C8C8DC"/></linearGradient></defs><path d="M5.5 0.5h7l3 3v11h-10z" fill="url(#pg)" stroke="#A0A0B8"/><path d="M12.5 0.5v3h3" fill="#D8D8E8" stroke="#A0A0B8"/><path d="M4.5 1.5c-0.5 3 0.5 6 3 8.5l4.5 2.5M4.8 2c0.8 4-1 8.5-3.8 11.5M1.5 12.5c3-2 7-2.5 10.5-0.5" fill="none" stroke="#E5301C" stroke-width="1.7"/></svg>
<div class="a c" style="left:1px;top:64px;color:#000;width:37px;overflow:hidden">811</div>
<div class="a c" style="left:79px;top:64px;color:#000;width:210px;overflow:hidden">Bollino, M. and Costa, M.</div>
<div class="a c" style="left:291px;top:64px;color:#000">2004</div>
<div class="a c" style="left:331px;top:64px;color:#000;width:309px;overflow:hidden;letter-spacing:0.17px">A new subspecies of Parides phosphorus (Bates, 186...</div>
<div class="a c" style="left:642px;top:64px;color:#000;width:96px;overflow:hidden;letter-spacing:0.22px">Notes on Papili...</div>
<div class="a " style="left:0px;top:80px;width:38px;height:15px;background:#F9B4B4"></div>
<div class="a " style="left:39px;top:80px;width:18px;height:15px;background:#FFFFFF"></div>
<div class="a " style="left:58px;top:80px;width:18px;height:15px;background:#FFFFFF"></div>
<div class="a " style="left:77px;top:80px;width:212px;height:15px;background:#E5E9FA"></div>
<div class="a " style="left:290px;top:80px;width:38px;height:15px;background:#E5E9FA"></div>
<div class="a " style="left:329px;top:80px;width:311px;height:15px;background:#E5E9FA"></div>
<div class="a " style="left:641px;top:80px;width:95px;height:15px;background:#E5E9FA"></div>
<div class="a " style="left:0px;top:95px;width:736px;height:1px;background:#D4D0C8"></div>
<svg class="a" style="left:39px;top:80px;" width="17" height="15" viewBox="0 0 17 15"><defs><linearGradient id="pg" x1="0" y1="0" x2="1" y2="1"><stop offset="0" stop-color="#FFFFFF"/><stop offset="1" stop-color="#C8C8DC"/></linearGradient></defs><path d="M5.5 0.5h7l3 3v11h-10z" fill="url(#pg)" stroke="#A0A0B8"/><path d="M12.5 0.5v3h3" fill="#D8D8E8" stroke="#A0A0B8"/><path d="M4.5 1.5c-0.5 3 0.5 6 3 8.5l4.5 2.5M4.8 2c0.8 4-1 8.5-3.8 11.5M1.5 12.5c3-2 7-2.5 10.5-0.5" fill="none" stroke="#E5301C" stroke-width="1.7"/></svg>
<div class="a c" style="left:1px;top:80px;color:#000;width:37px;overflow:hidden">812</div>
<div class="a c" style="left:79px;top:80px;color:#000;width:210px;overflow:hidden">Bollino, M., Greeney, H. and Vitale, F.</div>
<div class="a c" style="left:291px;top:80px;color:#000">2002</div>
<div class="a c" style="left:331px;top:80px;color:#000;width:309px;overflow:hidden;letter-spacing:0.17px">On some hitherto unknown females of the genus Cata...</div>
<div class="a c" style="left:642px;top:80px;color:#000;width:96px;overflow:hidden;letter-spacing:0.35px">Lambillionea</div>
<div class="a " style="left:0px;top:96px;width:38px;height:15px;background:#F9B4B4"></div>
<div class="a " style="left:39px;top:96px;width:18px;height:15px;background:#FFFFFF"></div>
<div class="a " style="left:58px;top:96px;width:18px;height:15px;background:#FFFFFF"></div>
<div class="a " style="left:77px;top:96px;width:212px;height:15px;background:#E5E9FA"></div>
<div class="a " style="left:290px;top:96px;width:38px;height:15px;background:#E5E9FA"></div>
<div class="a " style="left:329px;top:96px;width:311px;height:15px;background:#E5E9FA"></div>
<div class="a " style="left:641px;top:96px;width:95px;height:15px;background:#E5E9FA"></div>
<div class="a " style="left:0px;top:111px;width:736px;height:1px;background:#D4D0C8"></div>
<div class="a c" style="left:1px;top:96px;color:#000;width:37px;overflow:hidden">813</div>
<div class="a c" style="left:79px;top:96px;color:#000;width:210px;overflow:hidden">Bollino, M. and Rodriguez, G.</div>
<div class="a c" style="left:291px;top:96px;color:#000">2004</div>
<div class="a c" style="left:331px;top:96px;color:#000;width:309px;overflow:hidden;letter-spacing:0.17px">Género Catasticta Butler, 1870.</div>
<div class="a c" style="left:642px;top:96px;color:#000;width:96px;overflow:hidden;letter-spacing:0.22px">In: Mariposas d...</div>
<div class="a " style="left:0px;top:112px;width:38px;height:15px;background:#F9B4B4"></div>
<div class="a " style="left:39px;top:112px;width:18px;height:15px;background:#FFFFFF"></div>
<div class="a " style="left:58px;top:112px;width:18px;height:15px;background:#FFFFFF"></div>
<div class="a " style="left:77px;top:112px;width:212px;height:15px;background:#E5E9FA"></div>
<div class="a " style="left:290px;top:112px;width:38px;height:15px;background:#E5E9FA"></div>
<div class="a " style="left:329px;top:112px;width:311px;height:15px;background:#E5E9FA"></div>
<div class="a " style="left:641px;top:112px;width:95px;height:15px;background:#E5E9FA"></div>
<div class="a " style="left:0px;top:127px;width:736px;height:1px;background:#D4D0C8"></div>
<svg class="a" style="left:39px;top:112px;" width="17" height="15" viewBox="0 0 17 15"><defs><linearGradient id="pg" x1="0" y1="0" x2="1" y2="1"><stop offset="0" stop-color="#FFFFFF"/><stop offset="1" stop-color="#C8C8DC"/></linearGradient></defs><path d="M5.5 0.5h7l3 3v11h-10z" fill="url(#pg)" stroke="#A0A0B8"/><path d="M12.5 0.5v3h3" fill="#D8D8E8" stroke="#A0A0B8"/><path d="M4.5 1.5c-0.5 3 0.5 6 3 8.5l4.5 2.5M4.8 2c0.8 4-1 8.5-3.8 11.5M1.5 12.5c3-2 7-2.5 10.5-0.5" fill="none" stroke="#E5301C" stroke-width="1.7"/></svg>
<div class="a c" style="left:1px;top:112px;color:#000;width:37px;overflow:hidden">814</div>
<div class="a c" style="left:79px;top:112px;color:#000;width:210px;overflow:hidden">Bollino, M. and Rodriguez, G.</div>
<div class="a c" style="left:291px;top:112px;color:#000">2003</div>
<div class="a c" style="left:331px;top:112px;color:#000;width:309px;overflow:hidden;letter-spacing:0.17px">Dos nuevas Catasticta de Antioquia (Colombia Norocc...</div>
<div class="a c" style="left:642px;top:112px;color:#000;width:96px;overflow:hidden;letter-spacing:0.35px">Lambillionea</div>
<div class="a " style="left:0px;top:128px;width:38px;height:15px;background:#FFFFFF"></div>
<div class="a " style="left:39px;top:128px;width:18px;height:15px;background:#FFFFFF"></div>
<div class="a " style="left:58px;top:128px;width:18px;height:15px;background:#FFFFFF"></div>
<div class="a " style="left:77px;top:128px;width:212px;height:15px;background:#E5E9FA"></div>
<div class="a " style="left:290px;top:128px;width:38px;height:15px;background:#E5E9FA"></div>
<div class="a " style="left:329px;top:128px;width:311px;height:15px;background:#E5E9FA"></div>
<div class="a " style="left:641px;top:128px;width:95px;height:15px;background:#FFFFFF"></div>
<div class="a " style="left:0px;top:143px;width:736px;height:1px;background:#D4D0C8"></div>
<svg class="a" style="left:39px;top:128px;" width="17" height="15" viewBox="0 0 17 15"><defs><linearGradient id="pg" x1="0" y1="0" x2="1" y2="1"><stop offset="0" stop-color="#FFFFFF"/><stop offset="1" stop-color="#C8C8DC"/></linearGradient></defs><path d="M5.5 0.5h7l3 3v11h-10z" fill="url(#pg)" stroke="#A0A0B8"/><path d="M12.5 0.5v3h3" fill="#D8D8E8" stroke="#A0A0B8"/><path d="M4.5 1.5c-0.5 3 0.5 6 3 8.5l4.5 2.5M4.8 2c0.8 4-1 8.5-3.8 11.5M1.5 12.5c3-2 7-2.5 10.5-0.5" fill="none" stroke="#E5301C" stroke-width="1.7"/></svg>
<div class="a c" style="left:1px;top:128px;color:#000;width:37px;overflow:hidden">815</div>
<div class="a c" style="left:79px;top:128px;color:#000;width:210px;overflow:hidden">Bollino, M. and Sala, G.</div>
<div class="a c" style="left:291px;top:128px;color:#000">2004</div>
<div class="a c" style="left:331px;top:128px;color:#000;width:309px;overflow:hidden;letter-spacing:0.17px">Synopsis of Papilio alexanor Esper (An updated revue ...</div>
<div class="a c" style="left:642px;top:128px;color:#000;width:96px;overflow:hidden;letter-spacing:0.35px"></div>
<div class="a " style="left:0px;top:144px;width:38px;height:15px;background:#F9B4B4"></div>
<div class="a " style="left:39px;top:144px;width:18px;height:15px;background:#FFFFFF"></div>
<div class="a " style="left:58px;top:144px;width:18px;height:15px;background:#FFFFFF"></div>
<div class="a " style="left:77px;top:144px;width:212px;height:15px;background:#E5E9FA"></div>
<div class="a " style="left:290px;top:144px;width:38px;height:15px;background:#E5E9FA"></div>
<div class="a " style="left:329px;top:144px;width:311px;height:15px;background:#E5E9FA"></div>
<div class="a " style="left:641px;top:144px;width:95px;height:15px;background:#E5E9FA"></div>
<div class="a " style="left:0px;top:159px;width:736px;height:1px;background:#D4D0C8"></div>
<svg class="a" style="left:39px;top:144px;" width="17" height="15" viewBox="0 0 17 15"><defs><linearGradient id="pg" x1="0" y1="0" x2="1" y2="1"><stop offset="0" stop-color="#FFFFFF"/><stop offset="1" stop-color="#C8C8DC"/></linearGradient></defs><path d="M5.5 0.5h7l3 3v11h-10z" fill="url(#pg)" stroke="#A0A0B8"/><path d="M12.5 0.5v3h3" fill="#D8D8E8" stroke="#A0A0B8"/><path d="M4.5 1.5c-0.5 3 0.5 6 3 8.5l4.5 2.5M4.8 2c0.8 4-1 8.5-3.8 11.5M1.5 12.5c3-2 7-2.5 10.5-0.5" fill="none" stroke="#E5301C" stroke-width="1.7"/></svg>
<div class="a c" style="left:1px;top:144px;color:#000;width:37px;overflow:hidden">816</div>
<div class="a c" style="left:79px;top:144px;color:#000;width:210px;overflow:hidden">Bollino, M. and Sala, G.</div>
<div class="a c" style="left:291px;top:144px;color:#000">1998</div>
<div class="a c" style="left:331px;top:144px;color:#000;width:309px;overflow:hidden;letter-spacing:0.17px">Un nuovo ibrido di Papilio (Pterourus) del Perù settentr...</div>
<div class="a c" style="left:642px;top:144px;color:#000;width:96px;overflow:hidden;letter-spacing:0.35px">Lambillionea</div>
<div class="a " style="left:0px;top:160px;width:38px;height:15px;background:#F9B4B4"></div>
<div class="a " style="left:39px;top:160px;width:18px;height:15px;background:#FFFFFF"></div>
<div class="a " style="left:58px;top:160px;width:18px;height:15px;background:#FFFFFF"></div>
<div class="a " style="left:77px;top:160px;width:212px;height:15px;background:#E5E9FA"></div>
<div class="a " style="left:290px;top:160px;width:38px;height:15px;background:#E5E9FA"></div>
<div class="a " style="left:329px;top:160px;width:311px;height:15px;background:#E5E9FA"></div>
<div class="a " style="left:641px;top:160px;width:95px;height:15px;background:#E5E9FA"></div>
<div class="a " style="left:0px;top:175px;width:736px;height:1px;background:#D4D0C8"></div>
<svg class="a" style="left:39px;top:160px;" width="17" height="15" viewBox="0 0 17 15"><defs><linearGradient id="pg" x1="0" y1="0" x2="1" y2="1"><stop offset="0" stop-color="#FFFFFF"/><stop offset="1" stop-color="#C8C8DC"/></linearGradient></defs><path d="M5.5 0.5h7l3 3v11h-10z" fill="url(#pg)" stroke="#A0A0B8"/><path d="M12.5 0.5v3h3" fill="#D8D8E8" stroke="#A0A0B8"/><path d="M4.5 1.5c-0.5 3 0.5 6 3 8.5l4.5 2.5M4.8 2c0.8 4-1 8.5-3.8 11.5M1.5 12.5c3-2 7-2.5 10.5-0.5" fill="none" stroke="#E5301C" stroke-width="1.7"/></svg>
<div class="a c" style="left:1px;top:160px;color:#000;width:37px;overflow:hidden">817</div>
<div class="a c" style="left:79px;top:160px;color:#000;width:210px;overflow:hidden">Bollino, M. and Sala, G.</div>
<div class="a c" style="left:291px;top:160px;color:#000">1998</div>
<div class="a c" style="left:331px;top:160px;color:#000;width:309px;overflow:hidden;letter-spacing:0.17px">Description of a new subspecies of Papilio (Pterourus)...</div>
<div class="a c" style="left:642px;top:160px;color:#000;width:96px;overflow:hidden;letter-spacing:0.22px">Entomologia Af...</div>
<div class="a " style="left:0px;top:176px;width:38px;height:15px;background:#F9B4B4"></div>
<div class="a " style="left:39px;top:176px;width:18px;height:15px;background:#FFFFFF"></div>
<div class="a " style="left:58px;top:176px;width:18px;height:15px;background:#FFFFFF"></div>
<div class="a " style="left:77px;top:176px;width:212px;height:15px;background:#E5E9FA"></div>
<div class="a " style="left:290px;top:176px;width:38px;height:15px;background:#E5E9FA"></div>
<div class="a " style="left:329px;top:176px;width:311px;height:15px;background:#E5E9FA"></div>
<div class="a " style="left:641px;top:176px;width:95px;height:15px;background:#E5E9FA"></div>
<div class="a " style="left:0px;top:191px;width:736px;height:1px;background:#D4D0C8"></div>
<svg class="a" style="left:39px;top:176px;" width="17" height="15" viewBox="0 0 17 15"><defs><linearGradient id="pg" x1="0" y1="0" x2="1" y2="1"><stop offset="0" stop-color="#FFFFFF"/><stop offset="1" stop-color="#C8C8DC"/></linearGradient></defs><path d="M5.5 0.5h7l3 3v11h-10z" fill="url(#pg)" stroke="#A0A0B8"/><path d="M12.5 0.5v3h3" fill="#D8D8E8" stroke="#A0A0B8"/><path d="M4.5 1.5c-0.5 3 0.5 6 3 8.5l4.5 2.5M4.8 2c0.8 4-1 8.5-3.8 11.5M1.5 12.5c3-2 7-2.5 10.5-0.5" fill="none" stroke="#E5301C" stroke-width="1.7"/></svg>
<div class="a c" style="left:1px;top:176px;color:#000;width:37px;overflow:hidden">818</div>
<div class="a c" style="left:79px;top:176px;color:#000;width:210px;overflow:hidden">Bollino, M. and Sala, G.</div>
<div class="a c" style="left:291px;top:176px;color:#000">1995</div>
<div class="a c" style="left:331px;top:176px;color:#000;width:309px;overflow:hidden;letter-spacing:0.17px">Considerations about proposed synonymy of some Pa...</div>
<div class="a c" style="left:642px;top:176px;color:#000;width:96px;overflow:hidden;letter-spacing:0.22px">Nachr.entomol....</div>
<div class="a " style="left:0px;top:192px;width:38px;height:15px;background:#F9B4B4"></div>
<div class="a " style="left:39px;top:192px;width:18px;height:15px;background:#FFFFFF"></div>
<div class="a " style="left:58px;top:192px;width:18px;height:15px;background:#FFFFFF"></div>
<div class="a " style="left:77px;top:192px;width:212px;height:15px;background:#E5E9FA"></div>
<div class="a " style="left:290px;top:192px;width:38px;height:15px;background:#E5E9FA"></div>
<div class="a " style="left:329px;top:192px;width:311px;height:15px;background:#E5E9FA"></div>
<div class="a " style="left:641px;top:192px;width:95px;height:15px;background:#E5E9FA"></div>
<div class="a " style="left:0px;top:207px;width:736px;height:1px;background:#D4D0C8"></div>
<svg class="a" style="left:39px;top:192px;" width="17" height="15" viewBox="0 0 17 15"><defs><linearGradient id="pg" x1="0" y1="0" x2="1" y2="1"><stop offset="0" stop-color="#FFFFFF"/><stop offset="1" stop-color="#C8C8DC"/></linearGradient></defs><path d="M5.5 0.5h7l3 3v11h-10z" fill="url(#pg)" stroke="#A0A0B8"/><path d="M12.5 0.5v3h3" fill="#D8D8E8" stroke="#A0A0B8"/><path d="M4.5 1.5c-0.5 3 0.5 6 3 8.5l4.5 2.5M4.8 2c0.8 4-1 8.5-3.8 11.5M1.5 12.5c3-2 7-2.5 10.5-0.5" fill="none" stroke="#E5301C" stroke-width="1.7"/></svg>
<div class="a c" style="left:1px;top:192px;color:#000;width:37px;overflow:hidden">819</div>
<div class="a c" style="left:79px;top:192px;color:#000;width:210px;overflow:hidden">Bollino, M. and Sala, G.</div>
<div class="a c" style="left:291px;top:192px;color:#000">1994</div>
<div class="a c" style="left:331px;top:192px;color:#000;width:309px;overflow:hidden;letter-spacing:0.17px">Papilio ascius mendozaensis: a new subspecies fro...</div>
<div class="a c" style="left:642px;top:192px;color:#000;width:96px;overflow:hidden;letter-spacing:0.35px">Lambillionea</div>
<div class="a " style="left:38px;top:0px;width:1px;height:198px;background:#D4D0C8"></div>
<div class="a " style="left:57px;top:0px;width:1px;height:198px;background:#D4D0C8"></div>
<div class="a " style="left:76px;top:0px;width:1px;height:198px;background:#D4D0C8"></div>
<div class="a " style="left:289px;top:0px;width:1px;height:198px;background:#D4D0C8"></div>
<div class="a " style="left:328px;top:0px;width:1px;height:198px;background:#D4D0C8"></div>
<div class="a " style="left:640px;top:0px;width:1px;height:198px;background:#D4D0C8"></div>
</div>
<div class="a sb" style="left:1001px;top:118px;width:18px;height:198px;"></div>
<div class="a sbb" style="left:1002px;top:119px;width:16px;height:15px;"></div>
<svg class="a" style="left:1006px;top:123px;" width="9" height="6" viewBox="0 0 9 6"><path d="M0.5 5.5l4-4 4 4" fill="none" stroke="#4D6185" stroke-width="2"/></svg>
<div class="a sbb" style="left:1002px;top:153px;width:16px;height:7px;"></div>
<div class="a sbb" style="left:1002px;top:300px;width:16px;height:15px;"></div>
<svg class="a" style="left:1006px;top:305px;" width="9" height="6" viewBox="0 0 9 6"><path d="M0.5 0.5l4 4 4-4" fill="none" stroke="#4D6185" stroke-width="2"/></svg>
<div class="a " style="left:263px;top:320px;width:757px;height:396px;border-top:1px solid #ACA899;border-left:1px solid #716F64"></div>
<div class="a btn" style="left:265px;top:322px;width:27px;height:15px;"></div>
<svg class="a" style="left:273px;top:325px;" width="10" height="9" viewBox="0 0 10 9"><path d="M1 1l8 7M9 1L1 8" stroke="#333" stroke-width="1.5"/></svg>
<div class="a t" style="left:241px;top:368px;color:#5B5BA5;font-size:22px;line-height:24px;height:24px;font-weight:bold;font-style:italic;transform:rotate(-90deg);transform-origin:center;width:76px;text-align:center;letter-spacing:0.6px">Article</div>
<div class="a " style="left:266px;top:534px;width:27px;height:1px;background:#C8C5B4"></div>
<div class="a " style="left:266px;top:611px;width:27px;height:1px;background:#C8C5B4"></div>
<div class="a " style="left:266px;top:688px;width:27px;height:1px;background:#C8C5B4"></div>
<svg class="a" style="left:266px;top:542px;" width="17" height="16" viewBox="0 0 17 16"><path d="M3 5l11 10" stroke="#111" stroke-width="2.5"/><path d="M3 5l4 4" stroke="#fff" stroke-width="1"/><path d="M8 1v4M6 3h4M13 1v3M11.5 2.5h3M2 11v3M0.5 12.5h3" stroke="#222" stroke-width="1"/></svg>
<svg class="a" style="left:267px;top:566px;" width="16" height="16" viewBox="0 0 16 16"><defs><radialGradient id="gg2" cx="0.35" cy="0.3" r="0.8"><stop offset="0" stop-color="#E8EAF4"/><stop offset="1" stop-color="#8088A8"/></radialGradient></defs><path d="M13.38 6.44L15.72 6.91L15.72 9.09L13.38 9.56L13.27 9.90L14.89 11.65L13.60 13.42L11.44 12.42L11.14 12.64L11.43 15.01L9.35 15.68L8.18 13.60L7.82 13.60L6.65 15.68L4.57 15.01L4.86 12.64L4.56 12.42L2.40 13.42L1.11 11.65L2.73 9.90L2.62 9.56L0.28 9.09L0.28 6.91L2.62 6.44L2.73 6.10L1.11 4.35L2.40 2.58L4.56 3.58L4.86 3.36L4.57 0.99L6.65 0.32L7.82 2.40L8.18 2.40L9.35 0.32L11.43 0.99L11.14 3.36L11.44 3.58L13.60 2.58L14.89 4.35L13.27 6.10z" fill="url(#gg2)" stroke="#7078A0" stroke-width="0.7"/><circle cx="8" cy="8" r="2.2" fill="#fff" stroke="#70789A" stroke-width="0.8"/></svg>
<svg class="a" style="left:266px;top:588px;" width="17" height="16" viewBox="0 0 17 16"><path d="M6.5 0.5h6l3 3v12h-9z" fill="#E4E4EC" stroke="#9A9AB0"/><path d="M5 1c-1 2 0 5 2 8l5 3M5 2c1 3-1 8-4 12M2 11c3-1 7-1 10 1" fill="none" stroke="#E03020" stroke-width="1.6"/></svg>
<svg class="a" style="left:269px;top:619px;" width="13" height="17" viewBox="0 0 13 17"><rect x="1" y="2" width="11" height="14" rx="1" fill="#4A8AE8" stroke="#1A40B0"/><rect x="3" y="3" width="5" height="12" fill="#C8E0FF"/><path d="M1 2h8" stroke="#888"/></svg>
<svg class="a" style="left:267px;top:644px;" width="16" height="13" viewBox="0 0 16 13"><path d="M1 12h14L8 1z" fill="#38B8F0" stroke="#1A88D0"/><path d="M3 10h10" stroke="#A8E4FF" stroke-width="1.5"/></svg>
<svg class="a" style="left:267px;top:666px;" width="16" height="14" viewBox="0 0 16 14"><path d="M1 1h14L8 13z" fill="#38B8F0" stroke="#1A88D0"/><path d="M2 3h12" stroke="#A8E4FF" stroke-width="1.5"/></svg>
<svg class="a" style="left:267px;top:696px;" width="17" height="17" viewBox="0 0 17 17"><circle cx="8.5" cy="8.5" r="8" fill="url(#hg)" stroke="#B00000" stroke-width="0.8"/><text x="8.5" y="13.5" text-anchor="middle" font-family="Liberation Sans" font-weight="bold" font-size="13" fill="#fff">?</text></svg>
<div class="a " style="left:293px;top:352px;width:725px;height:362px;border:1px solid #919B9C;background:#FCFCFE"></div>
<div class="a " style="left:295px;top:324px;width:122px;height:29px;border:1px solid #919B9C;border-bottom:none;border-radius:3px 3px 0 0;background:linear-gradient(#FFFFFF,#F6F6F2 60%,#ECEBE3)"></div>
<div class="a " style="left:418px;top:324px;width:102px;height:29px;border:1px solid #919B9C;border-bottom:none;border-radius:3px 3px 0 0;background:linear-gradient(#FFFFFF,#F6F6F2 60%,#ECEBE3)"></div>
<div class="a " style="left:592px;top:324px;width:69px;height:29px;border:1px solid #919B9C;border-bottom:none;border-radius:3px 3px 0 0;background:linear-gradient(#FFFFFF,#F6F6F2 60%,#ECEBE3)"></div>
<div class="a " style="left:662px;top:324px;width:65px;height:29px;border:1px solid #919B9C;border-bottom:none;border-radius:3px 3px 0 0;background:linear-gradient(#FFFFFF,#F6F6F2 60%,#ECEBE3)"></div>
<div class="a " style="left:729px;top:324px;width:115px;height:29px;border:1px solid #919B9C;border-bottom:none;border-radius:3px 3px 0 0;background:linear-gradient(#FFFFFF,#F6F6F2 60%,#ECEBE3)"></div>
<div class="a " style="left:520px;top:322px;width:72px;height:35px;border:1px solid #919B9C;border-bottom:none;border-radius:3px 3px 0 0;background:#FCFCFE"></div>
<div class="a " style="left:520px;top:322px;width:72px;height:2px;background:#E68B2C;border-radius:3px 3px 0 0"></div>
<div class="a " style="left:521px;top:324px;width:70px;height:1px;background:#FFC73C"></div>
<div class="a " style="left:301px;top:331px;width:16px;height:16px;background:#2525A0;border:1px solid #3C3C3C"></div>
<div class="a t" style="left:321px;top:333px;letter-spacing:-0.25px">Campo obbligatorio</div>
<div class="a " style="left:424px;top:331px;width:16px;height:16px;background:#5CAA6A;border:1px solid #3C3C3C"></div>
<div class="a t" style="left:444px;top:333px;letter-spacing:-0.3px">Campi opzionali</div>
<div class="a " style="left:528px;top:329px;width:16px;height:16px;background:#B09A10;border:1px solid #3C3C3C"></div>
<div class="a t" style="left:548px;top:331px;letter-spacing:-0.4px">General</div>
<div class="a " style="left:596px;top:331px;width:16px;height:16px;background:#B09A10;border:1px solid #3C3C3C"></div>
<div class="a t" style="left:616px;top:333px;letter-spacing:-0.05px">Abstract</div>
<div class="a " style="left:668px;top:331px;width:16px;height:16px;background:#B09A10;border:1px solid #3C3C3C"></div>
<div class="a t" style="left:687px;top:333px;letter-spacing:-0.1px">Review</div>
<div class="a " style="left:737px;top:330px;width:17px;height:18px;background:#fff;border-radius:3px"></div>
<svg class="a" style="left:740px;top:334px;" width="12" height="11" viewBox="0 0 12 11"><path d="M3 1h8M1 4h9M4 7h7M2 10h5" stroke="#2A7AB0" stroke-width="1.5"/></svg>
<div class="a t" style="left:761px;top:333px;letter-spacing:-0.25px">Sorgente BibTeX</div>
<div class="a " style="left:295px;top:356px;width:722px;height:357px;border:1px solid #7F9DB9;border-top-width:2px;border-right-width:2px;border-bottom-width:2px;background:#ECE9D8"></div>
<div class="a " style="left:327px;top:358px;width:1px;height:353px;background:#7F9DB9"></div>
<div class="a t" style="left:298px;top:358px;color:#55509A;line-height:14px">Taxa</div>
<div class="a t" style="left:298px;top:447px;color:#55509A;line-height:14px">File</div>
<div class="a " style="left:296px;top:446px;width:31px;height:1px;background:#7A7870"></div>
<div class="a " style="left:328px;top:445px;width:687px;height:2px;background:#7F9DB9"></div>
<div class="a t" style="left:298px;top:536px;color:#55509A;line-height:14px">Geo</div>
<div class="a " style="left:296px;top:535px;width:31px;height:1px;background:#7A7870"></div>
<div class="a " style="left:328px;top:534px;width:687px;height:2px;background:#7F9DB9"></div>
<div class="a t" style="left:298px;top:624px;color:#55509A;line-height:14px">Arg</div>
<div class="a " style="left:296px;top:623px;width:31px;height:1px;background:#7A7870"></div>
<div class="a " style="left:328px;top:622px;width:687px;height:2px;background:#7F9DB9"></div>
<div class="a " style="left:328px;top:358px;width:687px;height:87px;background:#fff"></div>
<div class="a t" style="left:330px;top:361px;font-size:12.5px;line-height:16px">Pieridae/Catasticta/flisa/sisamnus/prioneris/notha/hebra/philais/philoscia/troezene/gelba/seitzi/philone/revancha/chrysoloph</div>
<div class="a t" style="left:330px;top:377px;font-size:12.5px;line-height:16px">a/apaturina/tomyris/duida/semiramis/cinerea/rochereaui/uricoecheae/tricolor</div>
<div class="a " style="left:328px;top:536px;width:687px;height:87px;background:#fff"></div>
<div class="a t" style="left:330px;top:539px;font-size:12.5px;line-height:16px">Venezuela</div>
<div class="a " style="left:328px;top:624px;width:687px;height:87px;background:#fff"></div>
<div class="a t" style="left:330px;top:627px;font-size:12.5px;line-height:16px">sistematica/revisione/catalogo/fauna/corologia/sinonimia/status specie/ecologia/etologia/piante alimentari</div>
<div class="a " style="left:328px;top:447px;width:563px;height:15px;background:#fff"></div>
<div class="a " style="left:328px;top:462px;width:563px;height:1px;background:#808080"></div>
<div class="a " style="left:515px;top:447px;width:1px;height:16px;background:#808080"></div>
<div class="a " style="left:703px;top:447px;width:1px;height:16px;background:#808080"></div>
<div class="a " style="left:891px;top:447px;width:2px;height:87px;background:#7F9DB9"></div>
<div class="a t" style="left:517px;top:448px;letter-spacing:0px;line-height:13px">C:\Documents and Settings\user\Do...</div>
<div class="a t" style="left:705px;top:448px;line-height:13px">PDF</div>
<div class="a btn" style="left:894px;top:447px;width:19px;height:20px;"></div>
<svg class="a" style="left:896px;top:451px;" width="16" height="12" viewBox="0 0 16 12"><path d="M1 11h14L8 1z" fill="#38B8F0" stroke="#1A88D0"/><path d="M3 9h10" stroke="#A8E4FF" stroke-width="1.5"/></svg>
<div class="a btn" style="left:916px;top:447px;width:19px;height:20px;"></div>
<svg class="a" style="left:918px;top:449px;" width="16" height="16" viewBox="0 0 16 16"><path d="M6 1.5h3v5h5v3h-5v5H6v-5H1v-3h5z" fill="#48C030" stroke="#1E8A14"/></svg>
<div class="a btn" style="left:938px;top:447px;width:77px;height:20px;"></div>
<div class="a t" style="left:938px;top:451px;width:77px;text-align:center">Auto</div>
<div class="a btn" style="left:894px;top:470px;width:19px;height:20px;"></div>
<svg class="a" style="left:896px;top:473px;" width="16" height="13" viewBox="0 0 16 13"><path d="M1 1h14L8 12z" fill="#38B8F0" stroke="#1A88D0"/><path d="M2 3h12" stroke="#A8E4FF" stroke-width="1.5"/></svg>
<div class="a btn" style="left:916px;top:470px;width:19px;height:20px;"></div>
<svg class="a" style="left:918px;top:477px;" width="15" height="6" viewBox="0 0 15 6"><rect x="0.5" y="0.5" width="14" height="5" fill="#E04A20" stroke="#B83010"/></svg>
<div class="a btn" style="left:938px;top:470px;width:77px;height:20px;"></div>
<div class="a t" style="left:938px;top:474px;width:77px;text-align:center">Download</div>
</body></html>
